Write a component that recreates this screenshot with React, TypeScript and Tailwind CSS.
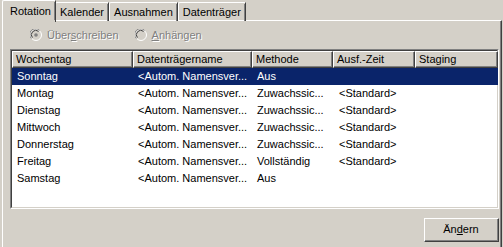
const rows = [
  { day: "Sonntag", name: "<Autom. Namensver...", method: "Aus", time: "" },
  { day: "Montag", name: "<Autom. Namensver...", method: "Zuwachssic...", time: "<Standard>" },
  { day: "Dienstag", name: "<Autom. Namensver...", method: "Zuwachssic...", time: "<Standard>" },
  { day: "Mittwoch", name: "<Autom. Namensver...", method: "Zuwachssic...", time: "<Standard>" },
  { day: "Donnerstag", name: "<Autom. Namensver...", method: "Zuwachssic...", time: "<Standard>" },
  { day: "Freitag", name: "<Autom. Namensver...", method: "Vollständig", time: "<Standard>" },
  { day: "Samstag", name: "<Autom. Namensver...", method: "Aus", time: "" },
];

const columns = [
  { label: "Wochentag", w: "w-[121px]" },
  { label: "Datenträgername", w: "w-[119px]" },
  { label: "Methode", w: "w-[81px]" },
  { label: "Ausf.-Zeit", w: "w-[82px]" },
  { label: "Staging", w: "w-[83px]" },
];

function Tab({ label, active }: { label: string; active?: boolean }) {
  if (active) {
    return (
      <div className="relative z-10 -mr-[1px] flex h-[22px] w-[54px] items-center border-l border-t border-r border-l-white border-t-white border-r-[#404040] bg-[#d4d0c8] pl-[7px] pb-[1px] rounded-tl-[2px]">
        <span className="flex-1 whitespace-nowrap border-r border-[#808080] leading-[18px]">{label}</span>
      </div>
    );
  }
  return (
    <div className="mt-[2px] flex h-[19px] items-center border-l border-t border-r border-l-white border-t-white border-r-[#404040] pl-[4px] rounded-tl-[2px]">
      <span className="whitespace-nowrap border-r border-[#808080] pr-[3px] leading-[17px]">{label}</span>
    </div>
  );
}

function Radio({ checked }: { checked?: boolean }) {
  return (
    <svg width="12" height="12" viewBox="0 0 12 12" className="shrink-0">
      <circle cx="6" cy="6" r="5.5" fill="#d4d0c8" stroke="#ffffff" strokeWidth="1" />
      <path d="M1.4 9.5 A5.5 5.5 0 0 1 9.5 1.4" fill="none" stroke="#808080" strokeWidth="1" />
      <path d="M2.4 8.6 A4.4 4.4 0 0 1 8.6 2.4" fill="none" stroke="#404040" strokeWidth="1" />
      {checked && <circle cx="6" cy="6" r="1.8" fill="#808080" />}
    </svg>
  );
}

export default function App() {
  return (
    <div
      className="relative h-[247px] w-[503px] overflow-hidden bg-[#d4d0c8] text-[11px] text-black"
      style={{ fontFamily: '"Liberation Sans", Arial, sans-serif' }}
    >
      <div className="flex h-[21px] items-start pl-[2px]">
        <Tab label="Rotation" active />
        <Tab label="Kalender" />
        <Tab label="Ausnahmen" />
        <Tab label="Datenträger" />
      </div>

      <div className="-mt-[1px] h-[227px] border-l border-t border-r border-l-white border-t-white border-r-[#404040] ml-[2px] mr-[1px]">
        <div className="h-full border-r border-[#808080] pl-[7px] pr-[1px] pt-[7px]">
          <div className="flex h-[14px] items-center pl-[20px] text-[#808080] [text-shadow:1px_1px_0_#fff]">
            <div className="flex items-center gap-[5px]">
              <Radio checked />
              <span>
                Über<span className="underline">s</span>chreiben
              </span>
            </div>
            <div className="ml-[16px] flex items-center gap-[5px]">
              <Radio />
              <span>
                <span className="underline">A</span>nhängen
              </span>
            </div>
          </div>

          <div className="mt-[7px] h-[160px] border-l border-t border-r border-b border-l-[#808080] border-t-[#808080] border-r-white border-b-white">
            <div className="h-full border-l border-t border-r border-b border-l-[#404040] border-t-[#404040] border-r-[#d4d0c8] border-b-[#d4d0c8] bg-white">
              <div className="flex h-[17px] bg-[#d4d0c8]">
                {columns.map((c) => (
                  <div
                    key={c.label}
                    className={`${c.w} shrink-0 border-l border-t border-r border-b border-l-white border-t-white border-r-[#404040] border-b-[#404040]`}
                  >
                    <div className="h-full truncate border-r border-b border-[#808080] pl-[3px] leading-[14px]">
                      {c.label}
                    </div>
                  </div>
                ))}
                <div className="flex-1 bg-white" />
              </div>
              {rows.map((r, i) => (
                <div
                  key={r.day}
                  className={`flex h-[17px] w-[486px] items-center leading-[17px] ${
                    i === 0 ? "bg-[#0a246a] text-white" : ""
                  }`}
                >
                  <div className="w-[121px] shrink-0 pl-[5px]">{r.day}</div>
                  <div className="w-[119px] shrink-0 pl-[5px] whitespace-nowrap">{r.name}</div>
                  <div className="w-[81px] shrink-0 pl-[5px] whitespace-nowrap">{r.method}</div>
                  <div className="w-[82px] shrink-0 pl-[6px] whitespace-nowrap">{r.time}</div>
                  <div className="w-[83px] shrink-0" />
                </div>
              ))}
            </div>
          </div>

          <div className="mt-[9px] flex justify-end">
            <button className="h-[24px] w-[75px] border-l border-t border-r border-b border-l-white border-t-white border-r-[#404040] border-b-[#404040] bg-[#d4d0c8]">
              <div className="flex h-full items-center justify-center border-r border-b border-[#808080]">
                Än<span className="underline">d</span>ern
              </div>
            </button>
          </div>
        </div>
      </div>
    </div>
  );
}
